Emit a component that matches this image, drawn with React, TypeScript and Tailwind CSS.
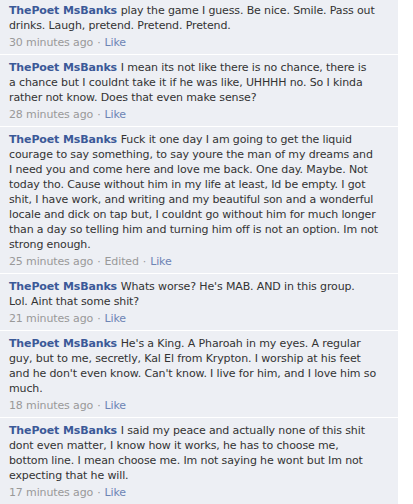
const comments = [
  {
    lines: [
      "play the game I guess. Be nice. Smile. Pass out",
      "drinks. Laugh, pretend. Pretend. Pretend.",
    ],
    time: "30 minutes ago",
  },
  {
    lines: [
      "I mean its not like there is no chance, there is",
      "a chance but I couldnt take it if he was like, UHHHH no. So I kinda",
      "rather not know. Does that even make sense?",
    ],
    time: "28 minutes ago",
  },
  {
    lines: [
      "Fuck it one day I am going to get the liquid",
      "courage to say something, to say youre the man of my dreams and",
      "I need you and come here and love me back. One day. Maybe. Not",
      "today tho. Cause without him in my life at least, Id be empty. I got",
      "shit, I have work, and writing and my beautiful son and a wonderful",
      "locale and dick on tap but, I couldnt go without him for much longer",
      "than a day so telling him and turning him off is not an option. Im not",
      "strong enough.",
    ],
    time: "25 minutes ago",
    edited: true,
  },
  {
    lines: [
      "Whats worse? He's MAB. AND in this group.",
      "Lol. Aint that some shit?",
    ],
    time: "21 minutes ago",
  },
  {
    lines: [
      "He's a King. A Pharoah in my eyes. A regular",
      "guy, but to me, secretly, Kal El from Krypton. I worship at his feet",
      "and he don't even know. Can't know. I live for him, and I love him so",
      "much.",
    ],
    time: "18 minutes ago",
  },
  {
    lines: [
      "I said my peace and actually none of this shit",
      "dont even matter, I know how it works, he has to choose me,",
      "bottom line. I mean choose me. Im not saying he wont but Im not",
      "expecting that he will.",
    ],
    time: "17 minutes ago",
  },
];

const Dot = () => <span className="mx-[4px] text-[#999999]">·</span>;

export default function App() {
  return (
    <div className="h-[504px] w-[413px] overflow-hidden bg-white font-['DejaVu_Sans',sans-serif] text-[11px] tracking-[-0.13px] text-[#333333]">
      <ul className="-mt-[2px] w-[398px] bg-[#edeff4]">
        {comments.map((comment, i) => (
          <li
            key={i}
            className={
              i === 0
                ? "pb-[4px] pl-[9px] pt-[5px]"
                : "border-t border-white pb-[4px] pl-[9px] pt-[5px]"
            }
          >
            <div className="whitespace-nowrap leading-[15px]">
              {comment.lines.map((line, j) => (
                <div key={j}>
                  {j === 0 && (
                    <span className="font-bold text-[#3b5998]">
                      ThePoet MsBanks{" "}
                    </span>
                  )}
                  {line}
                </div>
              ))}
            </div>
            <div className="mt-[2px] flex items-center leading-[15px] text-[#999999]">
              <span>{comment.time}</span>
              {comment.edited && (
                <>
                  <Dot />
                  <span>Edited</span>
                </>
              )}
              <Dot />
              <span className="text-[#6d84b4]">Like</span>
            </div>
          </li>
        ))}
      </ul>
    </div>
  );
}
